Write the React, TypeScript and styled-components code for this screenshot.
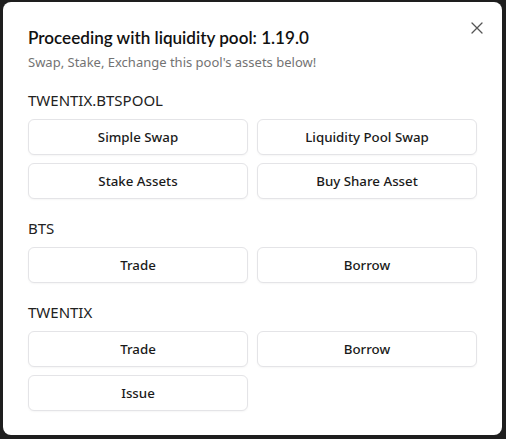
import React from "react";
import styled, { createGlobalStyle } from "styled-components";

const Global = createGlobalStyle`
  html, body { margin: 0; padding: 0; background: #1e1e1e; }
  body { font-family: "Noto Sans", "Open Sans", sans-serif; }
  * { box-sizing: border-box; }
`;

const Backdrop = styled.div`
  width: 506px;
  height: 439px;
  padding: 2px 4px 4px 3px;
  background: #1e1e1e;
`;

const Dialog = styled.div`
  position: relative;
  width: 499px;
  height: 433px;
  background: #ffffff;
  border-radius: 8px;
  padding: 22px 25px 0 25px;
  display: flex;
  flex-direction: column;
`;

const Close = styled.button`
  position: absolute;
  top: 19px;
  right: 18px;
  width: 14px;
  height: 14px;
  padding: 0;
  border: none;
  background: transparent;
  display: flex;
  align-items: center;
  justify-content: center;
`;

const Title = styled.h2`
  margin: 0;
  font-family: "Lato", "Noto Sans", sans-serif;
  font-size: 17.1px;
  line-height: 28px;
  font-weight: 600;
  color: #111;
`;

const Subtitle = styled.p`
  margin: 1px 0 0 0;
  font-size: 13px;
  line-height: 18px;
  color: #737373;
`;

const Section = styled.section`
  display: flex;
  flex-direction: column;
  margin-top: 19px;
`;

const Label = styled.div`
  font-size: 15px;
  line-height: 20px;
  color: #222;
  margin-bottom: 9px;
`;

const Grid = styled.div`
  display: grid;
  grid-template-columns: 220px 220px;
  column-gap: 9px;
  row-gap: 8px;
`;

const ActionButton = styled.button`
  height: 36px;
  border: 1px solid #e4e4e7;
  border-radius: 6px;
  background: #fff;
  box-shadow: 0 1px 2px rgba(0, 0, 0, 0.04);
  font-family: inherit;
  font-size: 13.3px;
  font-weight: 500;
  color: #1a1a1a;
  cursor: pointer;
`;

const sections = [
  { name: "TWENTIX.BTSPOOL", actions: ["Simple Swap", "Liquidity Pool Swap", "Stake Assets", "Buy Share Asset"] },
  { name: "BTS", actions: ["Trade", "Borrow"] },
  { name: "TWENTIX", actions: ["Trade", "Borrow", "Issue"] },
];

export default function App() {
  return (
    <>
      <Global />
      <Backdrop>
        <Dialog>
          <Close aria-label="Close">
            <svg width="12" height="12" viewBox="0 0 12 12">
              <path d="M1 1 L11 11 M11 1 L1 11" stroke="#555" strokeWidth="1.3" strokeLinecap="round" />
            </svg>
          </Close>
          <Title>Proceeding with liquidity pool: 1.19.0</Title>
          <Subtitle>Swap, Stake, Exchange this pool's assets below!</Subtitle>
          {sections.map((s) => (
            <Section key={s.name}>
              <Label>{s.name}</Label>
              <Grid>
                {s.actions.map((a) => (
                  <ActionButton key={a}>{a}</ActionButton>
                ))}
              </Grid>
            </Section>
          ))}
        </Dialog>
      </Backdrop>
    </>
  );
}
